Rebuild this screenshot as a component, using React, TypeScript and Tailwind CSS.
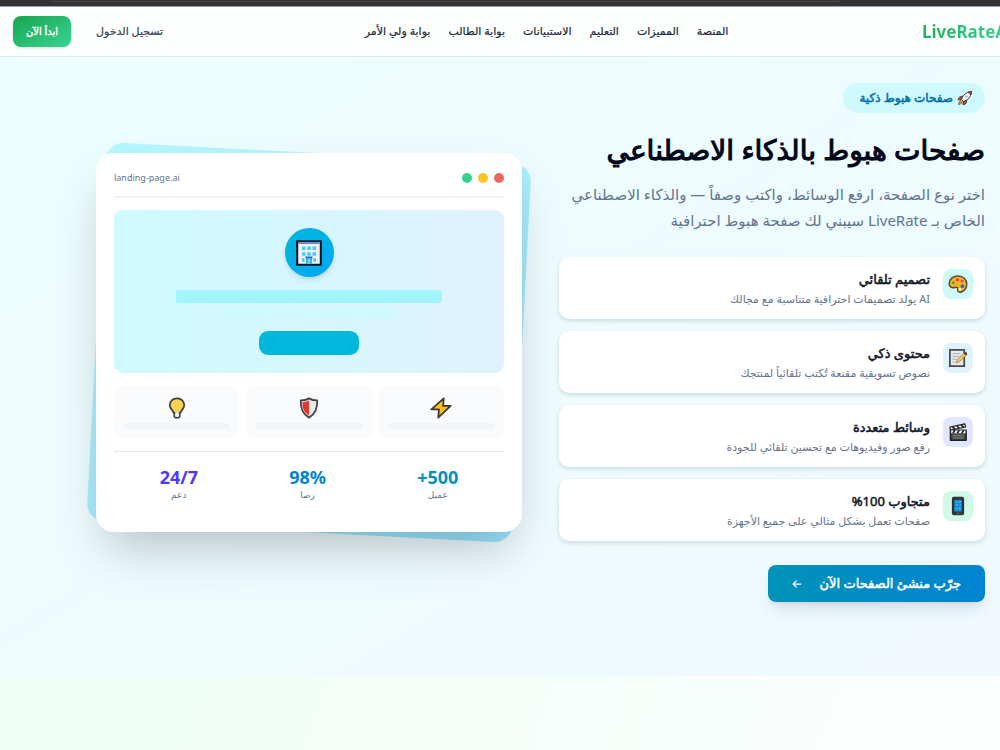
// src/pages/LandingPagesSection.tsx
import type { ReactNode } from 'react';

const navItems = ['المنصة', 'المميزات', 'التعليم', 'الاستبيانات', 'بوابة الطالب', 'بوابة ولي الأمر'];

function RocketIcon() {
  return (
    <svg viewBox="0 0 32 32" className="size-4" aria-hidden="true">
      <path d="M12 12 5 14l-3 6 7-1zM20 20l-2 7-6 3 1-7z" fill="#d83b2d" stroke="#333" strokeWidth="1.6" strokeLinejoin="round" />
      <path d="M8 21c-3 1-4 4-5 8 4-1 7-2 8-5z" fill="#f7a928" stroke="#333" strokeWidth="1.4" />
      <path d="M9 19C12 10 18 4 29 3c-1 11-7 17-16 20z" fill="#eef2f5" stroke="#333" strokeWidth="1.8" strokeLinejoin="round" />
      <path d="M22 4.500c2-.9 4-1.300 7-1.500-.2 3-.6 5-1.500 7z" fill="#d83b2d" stroke="#333" strokeWidth="1.4" />
      <circle cx="19" cy="13" r="1.600" fill="#c3d0da" stroke="#8795a0" strokeWidth="1" />
    </svg>
  );
}

function PaletteIcon() {
  return (
    <svg viewBox="0 0 32 32" className="size-5" aria-hidden="true">
      <path
        d="M16 3C8 3 2 8.500 2 15c0 5 3.500 7.500 7 7 3-.4 4.500-1.500 6 0 1.500 1.600-.5 3.500 1 5.500 1.500 2.200 4.500 2 7 .5C28 25.500 30 21 30 16 30 8.500 24 3 16 3z"
        fill="#fbb31c"
        stroke="#5a4a35"
        strokeWidth="2.400"
      />
      <circle cx="8.500" cy="14" r="2.200" fill="#1fa187" />
      <circle cx="15" cy="9" r="2.400" fill="#e03c31" />
      <circle cx="22.500" cy="11.500" r="2.200" fill="#c24bb0" />
      <circle cx="23" cy="19.500" r="3" fill="#2b6fc0" />
      <circle cx="19" cy="24.500" r="2" fill="#fff" />
    </svg>
  );
}

function MemoIcon() {
  return (
    <svg viewBox="0 0 32 32" className="size-5" aria-hidden="true">
      <path d="M3 3h23v26H3z" fill="#e6e9eb" stroke="#4a4a4a" strokeWidth="2.800" strokeLinejoin="round" />
      <path d="M7 9h13M7 13.500h11M7 18h7M7 22.500h5" stroke="#aab2b8" strokeWidth="1.600" />
      <path d="m13 24 1.500-5L26 7.500l3.500 3.500L18 22.500z" fill="#fcc43c" stroke="#777" strokeWidth="1" strokeLinejoin="round" />
      <path d="m25 8.500 2-2c1.500-1 4.500 1.500 3.500 3.500l-2 2z" fill="#444" />
    </svg>
  );
}

function ClapperIcon() {
  return (
    <svg viewBox="0 0 32 32" className="size-5" aria-hidden="true">
      <path d="M4 13h25v16H4z" fill="#4a4a4a" stroke="#222" strokeWidth="2.400" strokeLinejoin="round" />
      <path d="M3 8 27 3l1 5L4 13z" fill="#f2f2f2" stroke="#222" strokeWidth="2" strokeLinejoin="round" />
      <path d="m7 7.500 4 4M14 6l4 4M21 4.500l4 4" stroke="#222" strokeWidth="2.800" />
      <path d="M5 13.500h23V18H5z" fill="#f2f2f2" />
      <path d="m11 13-3 5M18 13l-3 5M25 13l-3 5" stroke="#222" strokeWidth="2.600" />
      <path d="M8 22h17M8 25.500h17" stroke="#8b8b8b" strokeWidth="1.400" />
    </svg>
  );
}

function PhoneIcon() {
  return (
    <svg viewBox="0 0 32 32" className="size-5" aria-hidden="true">
      <rect x="7" y="2" width="18" height="28" rx="2" fill="#2f3338" stroke="#222" strokeWidth="1.500" />
      <path d="M10 6h12v19H10z" fill="#1583cf" />
      <path d="M12 8h3v3h-3zM17 8h4v3h-4zM12 13h4v3h-4zM18 13h3v3h-3zM12 18h3v4h-3zM17 18h4v4h-4z" fill="#35b4f2" />
      <path d="M14 27.500h4" stroke="#8a8f94" strokeWidth="1.200" />
    </svg>
  );
}

function BuildingIcon() {
  return (
    <svg viewBox="0 0 32 32" className="size-[28px]" aria-hidden="true">
      <path d="M2.500 2.500h27v27h-27z" fill="#f3f3f5" stroke="#15172b" strokeWidth="2.400" />
      <path d="M4 4h24v1.500H4z" fill="#3b6fc4" />
      <path
        d="M8 8.500h4v4H8zM14 8.500h4v4h-4zM20 8.500h4v4h-4zM8 15h4v4H8zM14 15h4v4h-4zM20 15h4v4h-4zM8 22h3v4H8zM21 22h3v4h-3z"
        fill="#42cdf5"
      />
      <path d="M12.500 21h7v7.500h-7z" fill="#35b9dc" />
      <path d="M12 20h8v2h-8z" fill="#2266bd" />
      <path d="M16 22v6.500" stroke="#8be3f5" strokeWidth="1.500" />
    </svg>
  );
}

function BulbIcon() {
  return (
    <svg viewBox="0 0 32 32" className="size-[22px]" aria-hidden="true">
      <path d="M12 22h8v6.500c-1 2.500-7 2.500-8 0z" fill="#e6e8ea" stroke="#444" strokeWidth="2.400" />
      <path d="M16 2C9.500 2 5.500 6.500 5.500 12c0 5 4.500 7 6 11.500h9c1.500-4.500 6-6.500 6-11.500C26.500 6.500 22.500 2 16 2z" fill="#fdd154" stroke="#444" strokeWidth="2.600" />
      <path d="M13.500 22h5v6h-5z" fill="#f4f4f4" />
    </svg>
  );
}

function ShieldIcon() {
  return (
    <svg viewBox="0 0 32 32" className="size-[22px]" aria-hidden="true">
      <path d="M16 2c4 2.500 7.500 3 12 3 0 12-2.500 19-12 25C6.500 24 4 17 4 5c4.500 0 8-.5 12-3z" fill="#e9e9e9" />
      <path d="M16 5v22C8.500 22 6.500 16 6.500 7.500 10 7.300 13 6.800 16 5z" fill="#e5362c" />
      <path d="M16 2c4 2.500 7.500 3 12 3 0 12-2.500 19-12 25C6.500 24 4 17 4 5c4.500 0 8-.5 12-3z" fill="none" stroke="#444" strokeWidth="2.600" strokeLinejoin="round" />
    </svg>
  );
}

function BoltIcon() {
  return (
    <svg viewBox="0 0 32 32" className="size-[22px]" aria-hidden="true">
      <path d="M20 2 2 18h11l-1 12 18-17H19z" fill="#fcbf1e" stroke="#403830" strokeWidth="2.600" strokeLinejoin="round" />
    </svg>
  );
}

interface Feature {
  title: string;
  text: string;
  tint: string;
  icon: ReactNode;
}

const features: Feature[] = [
  { title: 'تصميم تلقائي', text: 'AI يولد تصميمات احترافية متناسبة مع مجالك', tint: 'bg-cyan-100', icon: <PaletteIcon /> },
  { title: 'محتوى ذكي', text: 'نصوص تسويقية مقنعة تُكتب تلقائياً لمنتجك', tint: 'bg-sky-100', icon: <MemoIcon /> },
  { title: 'وسائط متعددة', text: 'رفع صور وفيديوهات مع تحسين تلقائي للجودة', tint: 'bg-indigo-100', icon: <ClapperIcon /> },
  { title: 'متجاوب 100%', text: 'صفحات تعمل بشكل مثالي على جميع الأجهزة', tint: 'bg-emerald-100', icon: <PhoneIcon /> },
];

const stats = [
  { value: '+500', label: 'عميل', color: 'text-cyan-600' },
  { value: '98%', label: 'رضا', color: 'text-sky-600' },
  { value: '24/7', label: 'دعم', color: 'text-indigo-600' },
];

// the Arabic bold face runs wide, so headings thicken the regular one instead
const heavy = '[-webkit-text-stroke:0.04em_currentColor]';

function Header() {
  return (
    <header className="flex h-[50px] items-center justify-between overflow-hidden border-b border-slate-200 bg-[#fdfffe] pl-[13px]">
      <a href="#" dir="ltr" className="w-[78px] bg-linear-to-r from-[#22b05c] to-[#38cc90] bg-clip-text text-[17px] font-bold whitespace-nowrap text-transparent">
        LiveRateAI
      </a>
      <nav className="flex gap-[18px] text-[11px] text-gray-800 [-webkit-text-stroke:0.02em_currentColor]">
        {navItems.map((item) => (
          <a key={item} href="#" className="whitespace-nowrap">{item}</a>
        ))}
      </nav>
      <div className="flex items-center gap-[25px] pr-2 text-[11px]">
        <a href="#" className="whitespace-nowrap text-gray-700 [-webkit-text-stroke:0.02em_currentColor]">تسجيل الدخول</a>
        <button className={`${heavy} h-[31px] rounded-lg bg-linear-to-br from-[#18a54e] to-[#38d493] px-[13px] text-[10px] whitespace-nowrap text-white shadow-sm`}>
          ابدأ الآن
        </button>
      </div>
    </header>
  );
}

function FeatureCard({ title, text, tint, icon }: Feature) {
  return (
    <li className="flex h-[62px] items-start gap-[13px] rounded-[10px] bg-white px-3 pt-3 shadow-[0_2px_4px_rgba(15,60,80,0.16)]">
      <div className={`${tint} flex size-[30px] shrink-0 items-center justify-center rounded-lg`}>{icon}</div>
      <div>
        <h3 className={`${heavy} text-[13px] leading-5 text-gray-900`}>{title}</h3>
        <p className="text-[11px] leading-5 text-slate-500">{text}</p>
      </div>
    </li>
  );
}

function Intro() {
  return (
    <div>
      <div className="flex">
        <span className={`${heavy} flex h-[30px] items-center gap-1 rounded-full bg-cyan-100 pr-3 pl-4 text-xs text-sky-700`}>
          <RocketIcon />
          صفحات هبوط ذكية
        </span>
      </div>
      <h1 className={`${heavy} mt-4 text-[28px] leading-10 whitespace-nowrap text-slate-950`}>صفحات هبوط بالذكاء الاصطناعي</h1>
      <p className="mt-3 text-[15px] leading-[26px] text-slate-500">
        اختر نوع الصفحة، ارفع الوسائط، واكتب وصفاً — والذكاء الاصطناعي الخاص بـ LiveRate سيبني لك صفحة هبوط احترافية
      </p>
      <ul className="mt-6 flex flex-col gap-3">
        {features.map((f) => (
          <FeatureCard key={f.title} {...f} />
        ))}
      </ul>
      <button className={`${heavy} mt-6 flex h-[37px] items-center gap-[18px] rounded-lg bg-linear-to-l from-sky-600 to-cyan-600 px-6 text-[13px] whitespace-nowrap text-white shadow-lg`}>
        جرّب منشئ الصفحات الآن
        <svg viewBox="0 0 12 12" className="size-[10px]" fill="none" stroke="currentColor" strokeWidth="1.500" aria-hidden="true">
          <path d="M11 6H1.500M5.500 2l-4 4 4 4" />
        </svg>
      </button>
    </div>
  );
}

function PagePreview() {
  return (
    <div className="relative">
      <div className="absolute inset-0 rotate-3 rounded-[18px] bg-linear-to-br from-cyan-300 to-sky-400 opacity-35" />
      <div className="relative rounded-[18px] bg-white p-[18px] shadow-[0_25px_50px_-12px_rgba(0,0,0,0.25)]">
        <div className="flex h-[27px] items-start justify-between border-b-2 border-slate-100">
          <div className="flex gap-[6px] pt-0.5">
            <span className="size-[10px] rounded-full bg-[#ef6666]" />
            <span className="size-[10px] rounded-full bg-[#fdc51f]" />
            <span className="size-[10px] rounded-full bg-[#38d08f]" />
          </div>
          <span className="text-[9px] leading-[14px] text-slate-500">landing-page.ai</span>
        </div>

        <div className="mt-3 flex flex-col items-center rounded-[9px] bg-linear-to-r from-cyan-100 to-sky-100 py-[18px]">
          <div className="flex size-[49px] items-center justify-center rounded-full bg-linear-to-br from-cyan-500 to-sky-500 shadow-md">
            <BuildingIcon />
          </div>
          <div className="mt-[13px] h-[13px] w-[68%] rounded-[3px] bg-cyan-200" />
          <div className="mt-[5px] h-[10px] w-[45%] rounded-[3px] bg-cyan-100" />
          <div className="mt-[13px] h-6 w-[100px] rounded-[9px] bg-cyan-500" />
        </div>

        <div className="mt-[13px] grid grid-cols-3 gap-[7px]">
          {[<BoltIcon />, <ShieldIcon />, <BulbIcon />].map((icon, i) => (
            <div key={i} className="flex h-[52px] flex-col items-center rounded-[9px] bg-slate-50 px-[9px] pt-[11px]">
              {icon}
              <div className="mt-1 h-[6px] w-full rounded-full bg-slate-100" />
            </div>
          ))}
        </div>

        <div className="mt-[13px] flex justify-around border-t border-slate-200 pt-[13px] pb-[13px] text-center">
          {stats.map((s) => (
            <div key={s.label}>
              <div dir="ltr" className={`${s.color} text-lg leading-6 font-bold`}>{s.value}</div>
              <div className="text-[9px] leading-3 text-slate-500">{s.label}</div>
            </div>
          ))}
        </div>
      </div>
    </div>
  );
}

export default function App() {
  return (
    <div dir="rtl" className="min-h-screen overflow-hidden bg-white font-['Noto_Sans','DejaVu_Sans',sans-serif]">
      <div className="h-[7px] border-b border-gray-400 bg-[#333]">
        <div className="mr-[16%] ml-[5%] h-[2px] rounded-b-sm border-b border-[#484848]" />
      </div>
      <Header />
      <main>
        <section className="bg-linear-to-br from-cyan-50 to-sky-50 pt-[26px] pr-[15px] pb-[74px] pl-24">
          <div className="grid grid-cols-2 items-center gap-[37px]">
            <Intro />
            <PagePreview />
          </div>
        </section>
        <section className="h-[74px] bg-linear-[110deg] from-[#ecfef5] to-[#fdfffe]" />
      </main>
    </div>
  );
}
